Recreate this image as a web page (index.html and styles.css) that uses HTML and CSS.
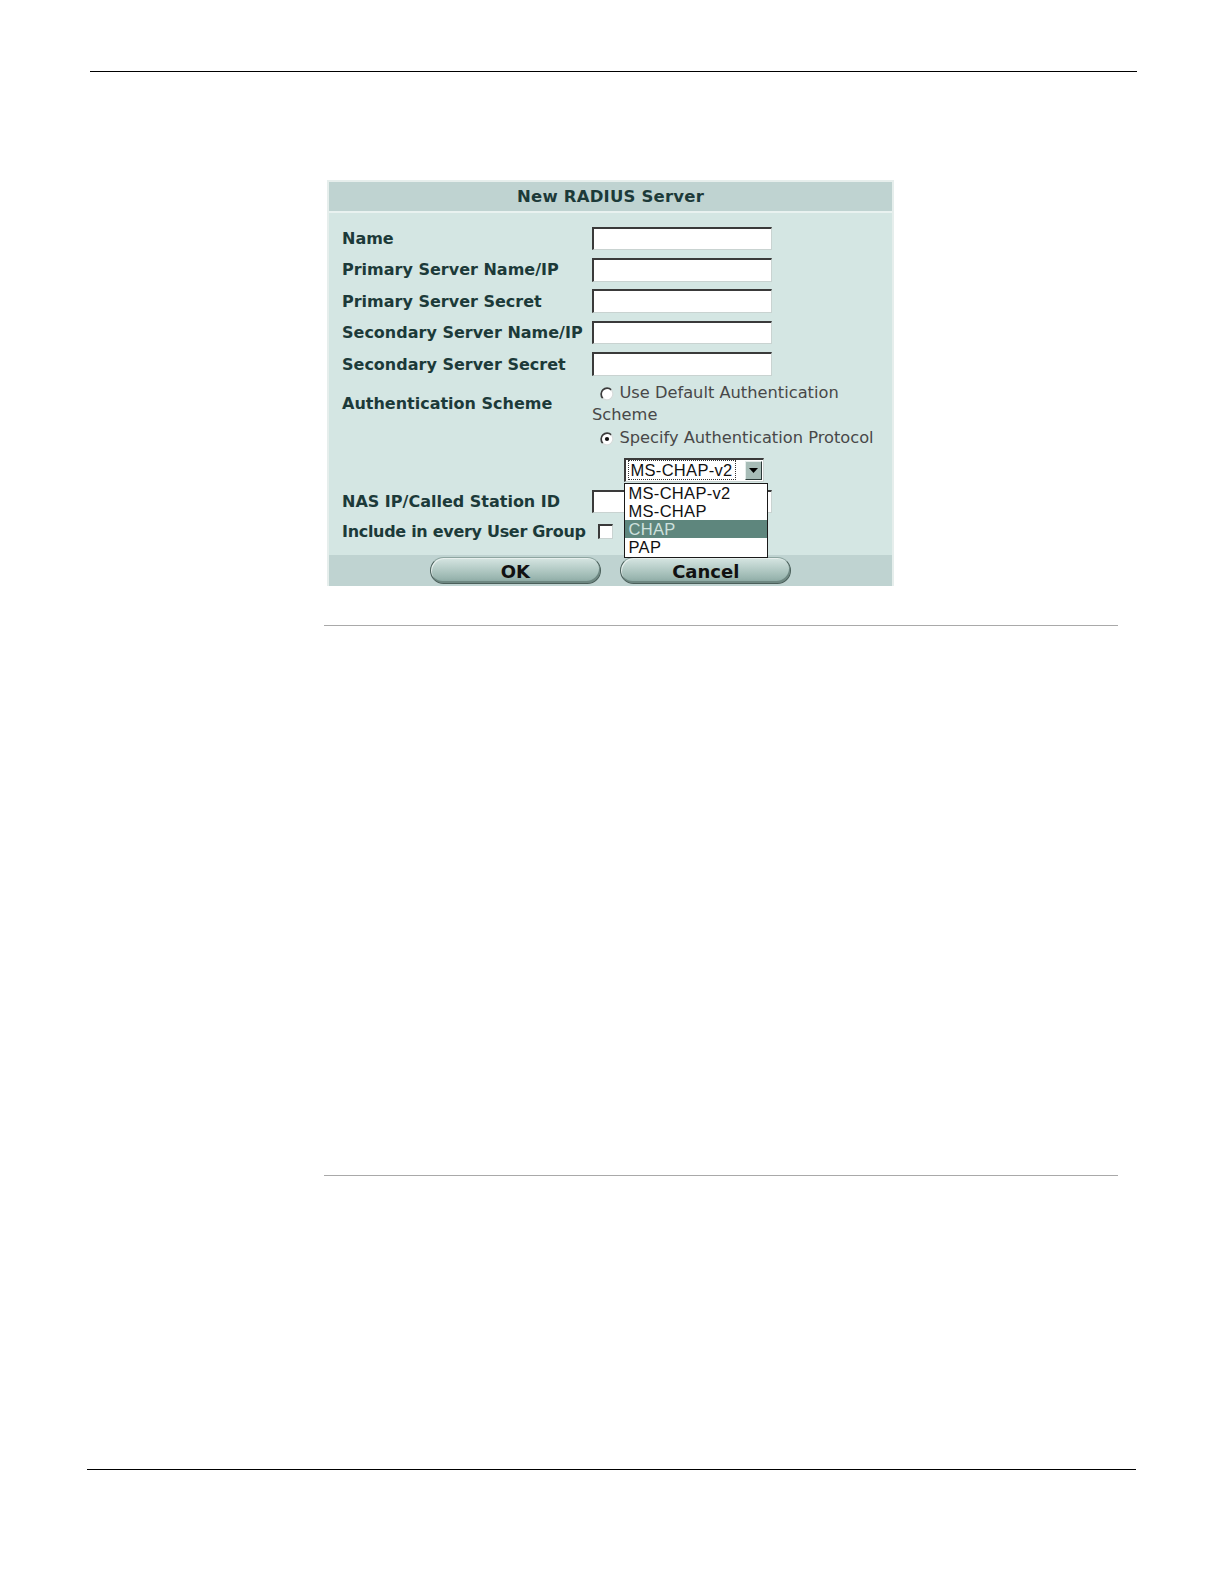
FILE: index.html
```html
<!DOCTYPE html>
<html>
<head>
<meta charset="utf-8">
<title>New RADIUS Server</title>
<link rel="stylesheet" href="styles.css">
</head>
<body>
<div class="page">
  <div class="rule-top"></div>

  <div class="dialog">
    <div class="dlg-title">New RADIUS Server</div>
    <div class="dlg-body">
      <div class="lbl">Name</div>
      <div class="fld"><span class="input"></span></div>

      <div class="lbl">Primary Server Name/IP</div>
      <div class="fld"><span class="input"></span></div>

      <div class="lbl">Primary Server Secret</div>
      <div class="fld"><span class="input"></span></div>

      <div class="lbl">Secondary Server Name/IP</div>
      <div class="fld"><span class="input"></span></div>

      <div class="lbl">Secondary Server Secret</div>
      <div class="fld"><span class="input"></span></div>

      <div class="lbl lbl-auth">Authentication Scheme</div>
      <div class="fld auth">
        <div class="opt"><svg class="radio" width="14" height="14" viewBox="0 0 14 14"><circle cx="7" cy="7" r="6" fill="#fff"/><path d="M2.76 11.24 A6 6 0 0 1 11.24 2.76" fill="none" stroke="#3c3c3c" stroke-width="1.7"/><path d="M11.24 2.76 A6 6 0 0 1 2.76 11.24" fill="none" stroke="#d6dbda" stroke-width="1.2"/></svg>Use Default Authentication Scheme</div>
        <div class="opt"><svg class="radio" width="14" height="14" viewBox="0 0 14 14"><circle cx="7" cy="7" r="6" fill="#fff"/><path d="M2.76 11.24 A6 6 0 0 1 11.24 2.76" fill="none" stroke="#3c3c3c" stroke-width="1.7"/><path d="M11.24 2.76 A6 6 0 0 1 2.76 11.24" fill="none" stroke="#d6dbda" stroke-width="1.2"/><circle cx="7" cy="7" r="2.1" fill="#111"/></svg>Specify Authentication Protocol</div>
        <div class="sel-wrap">
          <div class="select">
            <span class="sel-text">MS-CHAP-v2</span>
            <span class="sel-btn"><svg width="9" height="5" viewBox="0 0 9 5"><path d="M0 0 H9 L4.5 5 Z" fill="#000"/></svg></span>
          </div>
          <ul class="listbox">
            <li>MS-CHAP-v2</li>
            <li>MS-CHAP</li>
            <li class="hl">CHAP</li>
            <li>PAP</li>
          </ul>
        </div>
      </div>

      <div class="lbl">NAS IP/Called Station ID</div>
      <div class="fld"><span class="input"></span></div>

      <div class="lbl lbl-tight">Include in every User Group</div>
      <div class="fld fld-check"><span class="check"></span></div>
    </div>
    <div class="dlg-foot">
      <span class="btn">OK</span>
      <span class="btn">Cancel</span>
    </div>
  </div>

  <div class="rule-gray rule-gray-1"></div>
  <div class="rule-gray rule-gray-2"></div>
  <div class="rule-bottom"></div>
</div>
</body>
</html>
```

FILE: styles.css
```css
html, body {
  margin: 0;
  padding: 0;
  background: #ffffff;
}

.page {
  width: 1224px;
  height: 1584px;
  padding-top: 71px;
  box-sizing: border-box;
  font-family: "DejaVu Sans", Verdana, sans-serif;
}

.rule-top {
  margin-left: 90px;
  width: 1047px;
  height: 0;
  border-top: 1px solid #000;
}

.dialog {
  position: relative;
  margin-top: 108px;
  margin-left: 327px;
  width: 567px;
  box-sizing: border-box;
  border: 2px solid #e6eeec;
  border-bottom: none;
  background: #d4e6e3;
}

.dlg-title {
  height: 29px;
  line-height: 30px;
  background: #bfd3d1;
  border-bottom: 2px solid #e9f2f0;
  text-align: center;
  font-weight: bold;
  font-size: 16.5px;
  letter-spacing: 0.2px;
  color: #1c3a39;
}

.dlg-body {
  display: grid;
  grid-template-columns: 250px 1fr;
  row-gap: 7.9px;
  padding: 13.7px 12px 13px 13px;
  align-items: center;
}

.lbl {
  font-weight: bold;
  font-size: 16px;
  color: #1c3a39;
  white-space: nowrap;
}

.lbl-tight {
  letter-spacing: -0.3px;
}

.lbl-auth {
  align-self: start;
  padding-top: 10px;
}

.fld {
  display: flex;
  align-items: center;
  min-height: 20.6px;
}

.input {
  display: block;
  width: 180px;
  height: 23.5px;
  box-sizing: border-box;
  background: #fff;
  border-top: 2px solid #3a3a3a;
  border-left: 2px solid #3a3a3a;
  border-right: 1px solid #c9d3d1;
  border-bottom: 1px solid #c9d3d1;
}

.auth {
  display: block;
  font-size: 16.25px;
  color: #484848;
  line-height: 22.6px;
  margin-top: -2px;
}

.opt {
  width: 290px;
}

.radio {
  display: inline-block;
  vertical-align: -3px;
  margin-left: 7.5px;
  margin-right: 5.9px;
}

.sel-wrap {
  position: relative;
  margin-top: 8.1px;
  margin-left: 31.5px;
  width: 140.7px;
  z-index: 5;
}

.select {
  display: flex;
  align-items: center;
  height: 24.3px;
  box-sizing: border-box;
  background: #fff;
  border-top: 2px solid #3a3a3a;
  border-left: 2px solid #3a3a3a;
  border-right: 1px solid #c9d3d1;
  border-bottom: 1px solid #c9d3d1;
  padding-left: 3px;
  font-family: "Liberation Sans", Arial, sans-serif;
  font-size: 16.5px;
  letter-spacing: 0.3px;
  color: #111;
  line-height: 18px;
}

.sel-text {
  outline: 1px dotted #333;
  padding: 0 2px;
}

.sel-btn {
  margin-left: auto;
  margin-right: 1px;
  width: 17px;
  height: 19px;
  box-sizing: border-box;
  background: #a7bcb7;
  border-top: 1px solid #e4ecea;
  border-left: 1px solid #e4ecea;
  border-right: 1px solid #2c3a38;
  border-bottom: 1px solid #2c3a38;
  display: flex;
  align-items: center;
  justify-content: center;
}

.listbox {
  position: absolute;
  left: 0;
  top: 25.3px;
  width: 144.7px;
  margin: 0;
  padding: 0;
  list-style: none;
  background: #fff;
  border: 1px solid #1a1a1a;
  box-sizing: border-box;
  font-family: "Liberation Sans", Arial, sans-serif;
  font-size: 16.5px;
  letter-spacing: 0.3px;
  color: #111;
}

.listbox li {
  height: 18.2px;
  line-height: 18.2px;
  padding-left: 4px;
}

.listbox li.hl {
  background: #5e867d;
  color: #cfe1dd;
}

.check {
  display: block;
  margin-left: 6px;
  width: 14.5px;
  height: 15.5px;
  box-sizing: border-box;
  background: #fff;
  border-top: 2px solid #3a3a3a;
  border-left: 2px solid #3a3a3a;
  border-right: 1px solid #c9d3d1;
  border-bottom: 1px solid #c9d3d1;
}

.dlg-foot {
  height: 31.3px;
  background: #bfd3d1;
  display: flex;
  justify-content: center;
  align-items: flex-start;
  gap: 19.5px;
  padding-top: 2px;
  box-sizing: border-box;
}

.btn {
  display: block;
  width: 171px;
  height: 27.3px;
  box-sizing: border-box;
  border-radius: 14px;
  border: 1px solid #4a5f5a;
  border-top-color: #8ea6a1;
  background: linear-gradient(to bottom, #d6e5e2 0%, #b4cbc6 45%, #9ab6b0 80%, #87a49e 100%);
  box-shadow: inset -1px -2px 0 #6d8781, inset 1px 1px 0 #e7efed;
  text-align: center;
  font-weight: bold;
  font-size: 18px;
  line-height: 27px;
  color: #111;
}

.rule-gray {
  margin-left: 324px;
  width: 794px;
  height: 0;
  border-top: 1px solid #a9a9a9;
}

.rule-gray-1 {
  margin-top: 39.5px;
}

.rule-gray-2 {
  margin-top: 549px;
}

.rule-bottom {
  margin-top: 293px;
  margin-left: 87px;
  width: 1049px;
  height: 0;
  border-top: 1px solid #000;
}
```
